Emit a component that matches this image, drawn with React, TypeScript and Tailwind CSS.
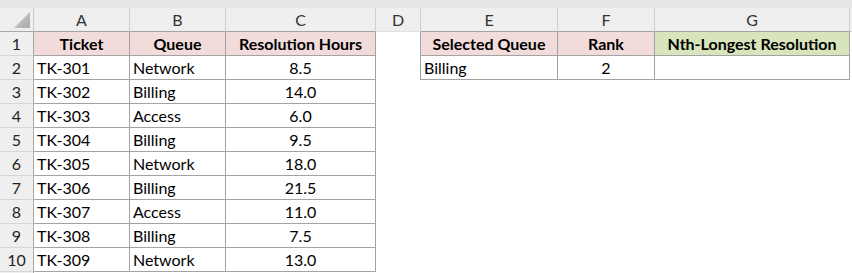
import React from "react"

const cols = ["A", "B", "C", "D", "E", "F", "G"]

const tickets: [string, string, string][] = [
  ["TK-301", "Network", "8.5"],
  ["TK-302", "Billing", "14.0"],
  ["TK-303", "Access", "6.0"],
  ["TK-304", "Billing", "9.5"],
  ["TK-305", "Network", "18.0"],
  ["TK-306", "Billing", "21.5"],
  ["TK-307", "Access", "11.0"],
  ["TK-308", "Billing", "7.5"],
  ["TK-309", "Network", "13.0"],
]

const font = { fontFamily: "Lato, 'Open Sans', Arial, sans-serif" }

function Cell({
  children,
  boxed,
  className = "",
}: {
  children?: React.ReactNode
  boxed?: boolean
  className?: string
}) {
  return (
    <div
      className={`h-6 border-r border-b flex items-center pt-px text-[16px] text-black overflow-hidden whitespace-nowrap ${
        boxed ? "border-[#a3a3a3]" : "border-transparent"
      } ${className}`}
    >
      {children}
    </div>
  )
}

function RowNum({ n }: { n?: number }) {
  return (
    <div className="h-6 bg-[#efefef] border-r border-b border-r-[#a8a8a8] border-b-[#d6d6d6] flex items-center justify-center pt-px text-[16px] text-[#222]">
      {n}
    </div>
  )
}

export default function App() {
  const rows: React.ReactNode[] = []

  for (let r = 1; r <= 10; r++) {
    rows.push(<RowNum key={`n${r}`} n={r} />)
    if (r === 1) {
      rows.push(
        <Cell key="a1" boxed className="bg-[#f2dcdb] justify-center font-bold">Ticket</Cell>,
        <Cell key="b1" boxed className="bg-[#f2dcdb] justify-center font-bold">Queue</Cell>,
        <Cell key="c1" boxed className="bg-[#f2dcdb] justify-center font-bold">Resolution Hours</Cell>,
      )
    } else {
      const t = tickets[r - 2]
      rows.push(
        <Cell key={`a${r}`} boxed className="pl-[3px]">{t[0]}</Cell>,
        <Cell key={`b${r}`} boxed className="pl-[3px]">{t[1]}</Cell>,
        <Cell key={`c${r}`} boxed className="justify-center">{t[2]}</Cell>,
      )
    }
    // column D, its right edge is the left border of the E:G block
    rows.push(
      <div
        key={`d${r}`}
        className={`h-6 border-r ${r <= 2 ? "border-[#a3a3a3]" : "border-transparent"}`}
      />,
    )
    if (r === 1) {
      rows.push(
        <Cell key="e1" boxed className="bg-[#f2dcdb] justify-center font-bold">Selected Queue</Cell>,
        <Cell key="f1" boxed className="bg-[#f2dcdb] justify-center font-bold">Rank</Cell>,
        <Cell key="g1" boxed className="bg-[#d8e4bc] justify-center font-bold">Nth-Longest Resolution</Cell>,
      )
    } else if (r === 2) {
      rows.push(
        <Cell key="e2" boxed className="pl-[3px]">Billing</Cell>,
        <Cell key="f2" boxed className="justify-center">2</Cell>,
        <Cell key="g2" boxed />,
      )
    } else {
      rows.push(<Cell key={`e${r}`} />, <Cell key={`f${r}`} />, <Cell key={`g${r}`} />)
    }
    rows.push(<div key={`x${r}`} className="h-6" />)
  }

  return (
    <div className="w-[852px] h-[273px] bg-white overflow-hidden" style={font}>
      <div className="h-2 bg-[#e6e6e6]" />
      <div className="grid grid-cols-[34px_96px_96px_150px_45px_137px_97px_195px_1fr]">
        {/* column headers */}
        <div className="h-6 bg-[#efefef] border-r border-b border-r-[#c8c8c8] border-b-[#a8a8a8] relative">
          <svg className="absolute left-0 top-0" width="33" height="23" viewBox="0 0 33 23">
            <defs>
              <linearGradient id="tri" x1="0" y1="0" x2="1" y2="1">
                <stop offset="0" stopColor="#d2d2d2" />
                <stop offset="1" stopColor="#a9a9a9" />
              </linearGradient>
            </defs>
            <polygon points="30,4 30,20 14,20" fill="url(#tri)" />
          </svg>
        </div>
        {cols.map((c) => (
          <div
            key={c}
            className={`h-6 bg-[#efefef] border-r border-b border-r-[#d0d0d0] flex items-center justify-center pt-px text-[16px] text-[#333] ${
              c === "D" ? "border-b-[#e2e2e2]" : "border-b-[#a3a3a3]"
            }`}
          >
            {c}
          </div>
        ))}
        <div className="h-6 bg-[#efefef] border-b border-[#d0d0d0]" />
        {rows}
        <div className="h-6 bg-[#efefef] border-r border-[#a8a8a8]" />
      </div>
    </div>
  )
}
